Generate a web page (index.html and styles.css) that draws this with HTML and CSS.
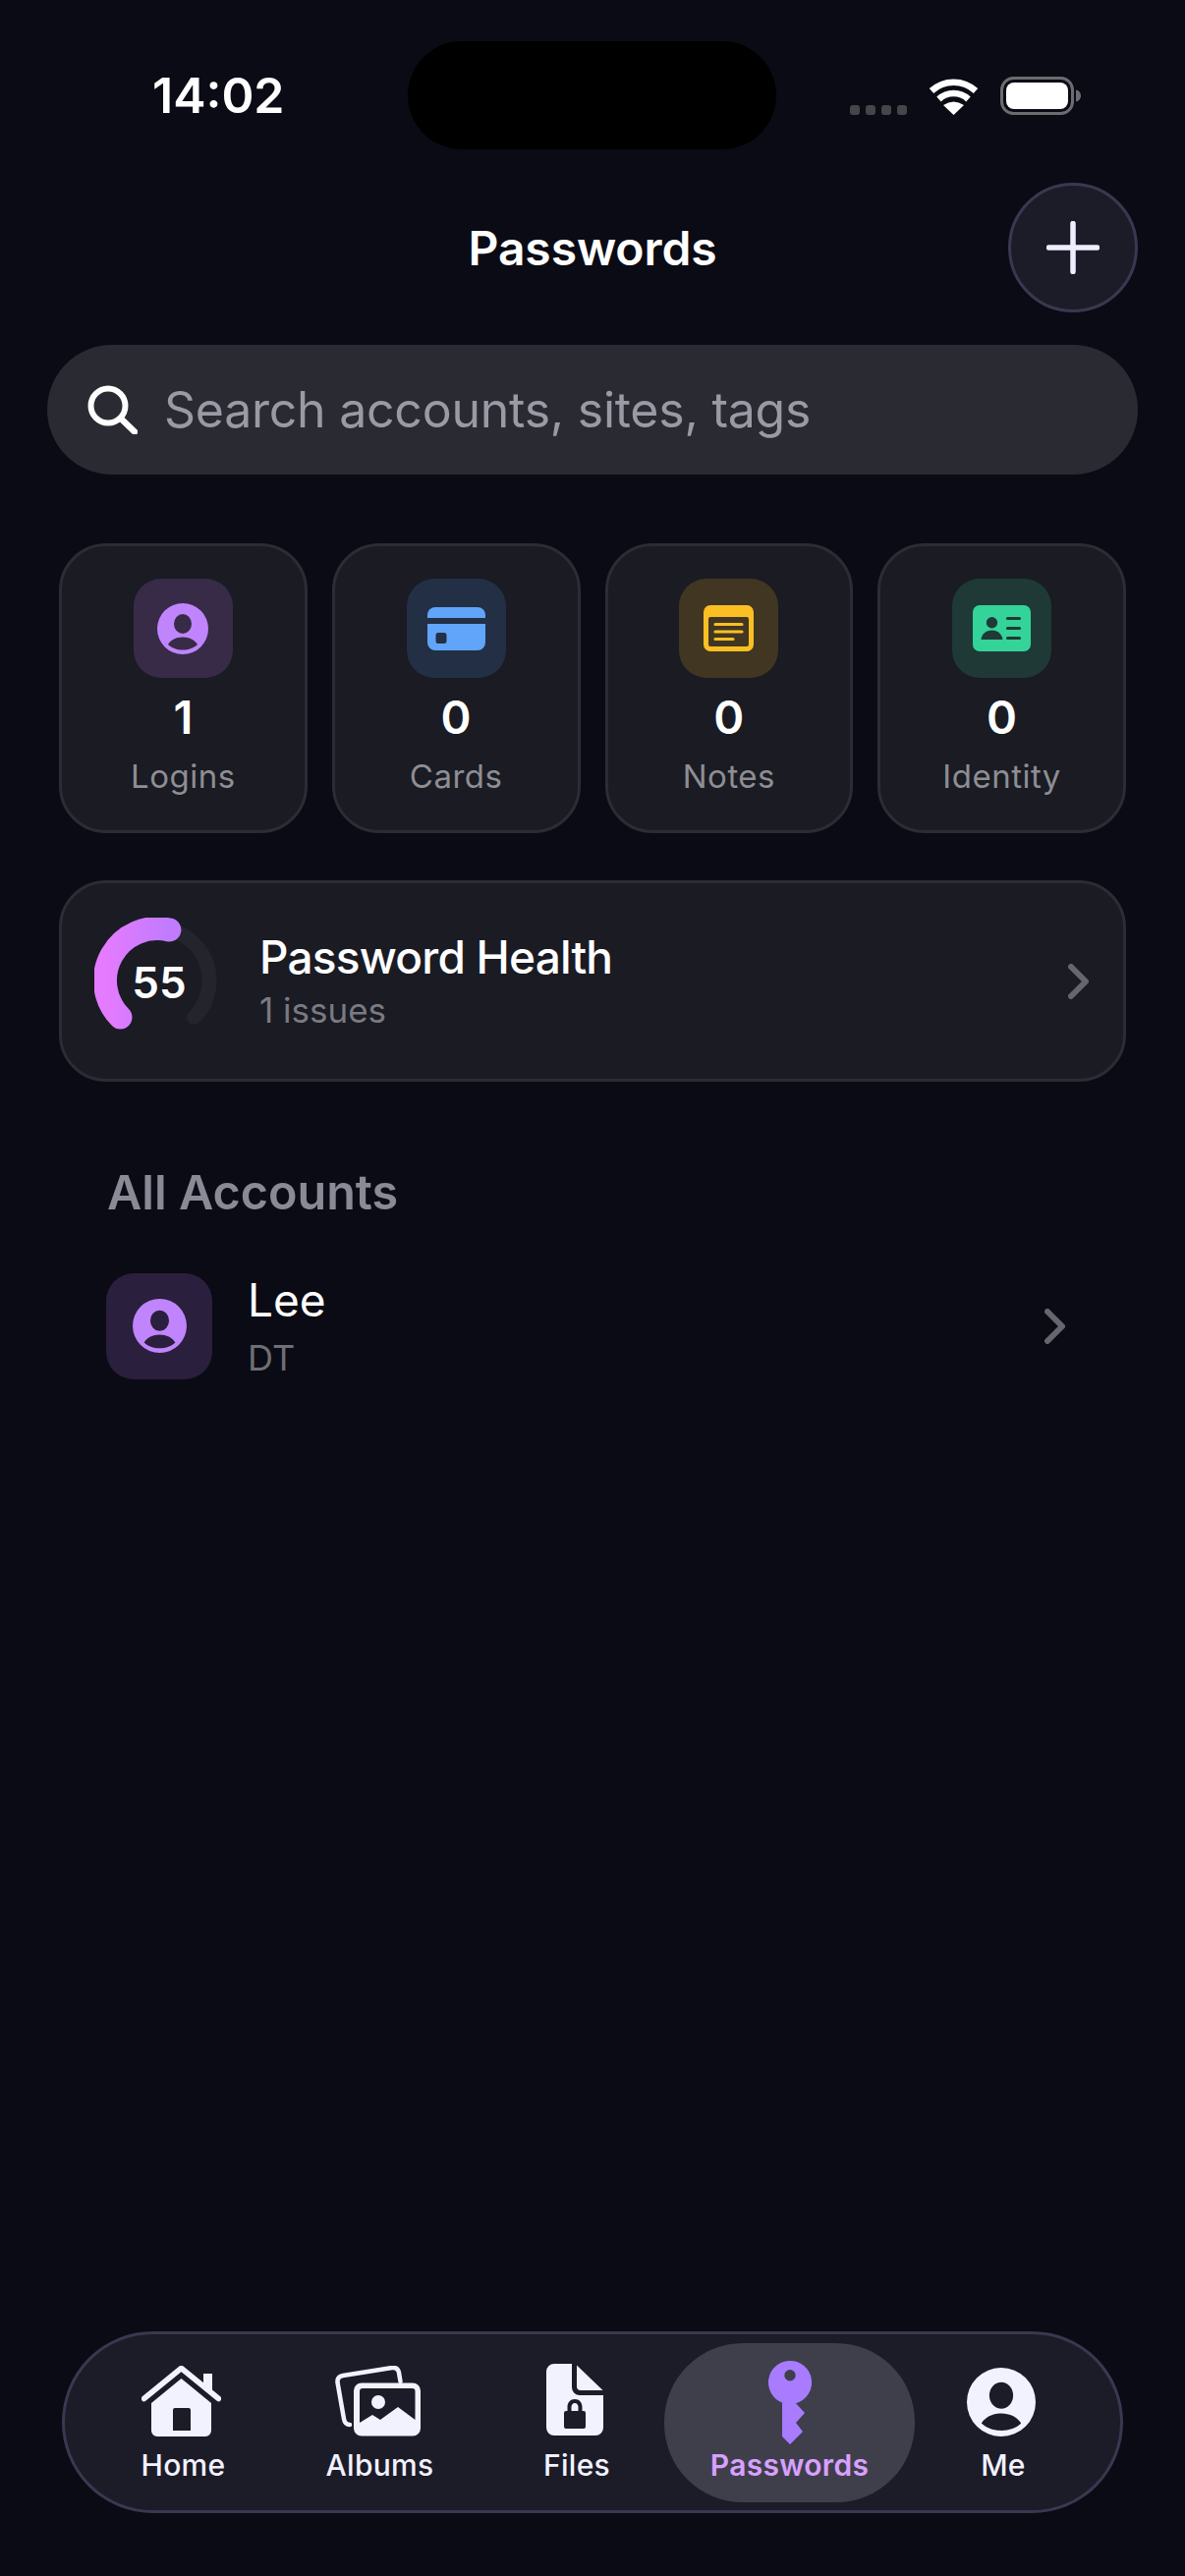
FILE: index.html
```html
<!DOCTYPE html>
<html lang="en">
<head>
    <meta charset="UTF-8">
    <meta name="viewport" content="width=device-width, initial-scale=1.0">
    <title>Passwords</title>
    <link rel="stylesheet" href="styles.css">
</head>
<body>

<svg class="defs" width="0" height="0">
    <defs>
        <path id="person" fill-rule="evenodd" d="M26 0a26 26 0 1 0 0 52a26 26 0 1 0 0-52zM26 11a9 10 0 1 1 0 20a9 10 0 1 1 0-20zM26 34.500c6.500 0 12 2.700 15 7.500c-3.500 3.500-9 5.500-15 5.500s-11.500-2-15-5.500c3-4.800 8.500-7.500 15-7.500z"/>
        <path id="chevron" d="M3 3l15 15l-15 15" fill="none" stroke="currentColor" stroke-width="6" stroke-linecap="round" stroke-linejoin="round"/>
    </defs>
</svg>

<div class="page">
    <div class="status">
        <span class="time">14:02</span>
        <div class="island"></div>
        <div class="status-icons">
            <div class="signal"><span></span><span></span><span></span><span></span></div>
            <svg class="wifi" width="51" height="37" viewBox="0 0 51 37">
                <path d="M3 12.500A33 33 0 0 1 48 12.500" fill="none" stroke="#fff" stroke-width="6.500"/>
                <path d="M10.500 21A22 22 0 0 1 40.500 21" fill="none" stroke="#fff" stroke-width="6.500"/>
                <path d="M25.500 37L15 27Q25.500 20 36 27Z" fill="#fff"/>
            </svg>
            <svg class="battery" width="82" height="39" viewBox="0 0 82 39">
                <rect x="1.500" y="1.500" width="72" height="36" rx="12" fill="none" stroke="#6c6c70" stroke-width="3"/>
                <rect x="6" y="6" width="63" height="27" rx="8" fill="#fff"/>
                <path d="M77 13.500c3 .5 5 3 5 6s-2 5.500-5 6z" fill="#6c6c70"/>
            </svg>
        </div>
    </div>

    <div class="header">
        <h1 class="title">Passwords</h1>
        <button class="add-btn">
            <svg width="54" height="54" viewBox="0 0 54 54">
                <path d="M27 2.500v49M2.500 27h49" stroke="#eeeeff" stroke-width="5.500" stroke-linecap="round"/>
            </svg>
        </button>
    </div>

    <div class="search">
        <svg width="51" height="50" viewBox="0 0 51 50">
            <circle cx="21" cy="21" r="17.500" fill="none" stroke="#fff" stroke-width="6"/>
            <path d="M34 34l14 13.500" stroke="#fff" stroke-width="6.500" stroke-linecap="round"/>
        </svg>
        <span class="search-text">Search accounts, sites, tags</span>
    </div>

    <div class="cards">
        <div class="card">
            <div class="card-icon icon-logins">
                <svg width="52" height="52" viewBox="0 0 52 52"><use href="#person"/></svg>
            </div>
            <div class="card-count">1</div>
            <div class="card-label">Logins</div>
        </div>
        <div class="card">
            <div class="card-icon icon-cards">
                <svg width="59" height="44" viewBox="0 0 59 44">
                    <path d="M0 11V8a8 8 0 0 1 8-8h43a8 8 0 0 1 8 8v3z"/>
                    <path fill-rule="evenodd" d="M0 17h59v19a8 8 0 0 1-8 8H8a8 8 0 0 1-8-8zM11 26a2.500 2.500 0 0 0-2.500 2.500v6a2.500 2.500 0 0 0 2.500 2.500h6a2.500 2.500 0 0 0 2.500-2.500v-6a2.500 2.500 0 0 0-2.500-2.500z"/>
                </svg>
            </div>
            <div class="card-count">0</div>
            <div class="card-label">Cards</div>
        </div>
        <div class="card">
            <div class="card-icon icon-notes">
                <svg width="51" height="47" viewBox="0 0 51 47">
                    <path fill-rule="evenodd" d="M7 0h37a7 7 0 0 1 7 7v33a7 7 0 0 1-7 7H7a7 7 0 0 1-7-7V7a7 7 0 0 1 7-7zM7 12a2 2 0 0 0-2 2v26a2 2 0 0 0 2 2h37a2 2 0 0 0 2-2V14a2 2 0 0 0-2-2z"/>
                    <path d="M12 19.500h27M12 27h27M12 34.500h18" stroke="currentColor" stroke-width="3.200" stroke-linecap="round"/>
                </svg>
            </div>
            <div class="card-count">0</div>
            <div class="card-label">Notes</div>
        </div>
        <div class="card">
            <div class="card-icon icon-identity">
                <svg width="59" height="47" viewBox="0 0 59 47">
                    <path fill-rule="evenodd" d="M7 0h45a7 7 0 0 1 7 7v33a7 7 0 0 1-7 7H7a7 7 0 0 1-7-7V7a7 7 0 0 1 7-7zM19.500 12a5.700 5.700 0 1 0 0 11.400a5.700 5.700 0 1 0 0-11.400zM19.500 25.500c-6 0-10.500 4-11 9.500h22c-.5-5.500-5-9.500-11-9.500z"/>
                    <path d="M35.500 13.500h12M35.500 23.500h12M35.500 33.500h12" stroke="#1f3a36" stroke-width="3.200" stroke-linecap="round"/>
                </svg>
            </div>
            <div class="card-count">0</div>
            <div class="card-label">Identity</div>
        </div>
    </div>

    <div class="health">
        <div class="gauge">
            <svg width="128" height="128" viewBox="0 0 128 128">
                <defs>
                    <linearGradient id="gaugeFill" x1="0" y1="0" x2="1" y2="0">
                        <stop offset="0" stop-color="#e57bff"/>
                        <stop offset="1" stop-color="#c07bff"/>
                    </linearGradient>
                </defs>
                <path d="M101.500 101.500A53 53 0 1 0 26.500 101.500" fill="none" stroke="#24242c" stroke-width="15" stroke-linecap="round"/>
                <path d="M26.500 101.500A53 53 0 0 1 76.400 12.500" fill="none" stroke="url(#gaugeFill)" stroke-width="24" stroke-linecap="round"/>
            </svg>
            <span class="gauge-value">55</span>
        </div>
        <div class="health-text">
            <div class="health-title">Password Health</div>
            <div class="health-sub">1 issues</div>
        </div>
        <svg class="chevron" width="21" height="36" viewBox="0 0 21 36"><use href="#chevron"/></svg>
    </div>

    <h2 class="section-title">All Accounts</h2>

    <div class="account">
        <div class="account-icon">
            <svg width="55" height="55" viewBox="0 0 52 52"><use href="#person"/></svg>
        </div>
        <div class="account-text">
            <div class="account-name">Lee</div>
            <div class="account-sub">DT</div>
        </div>
        <svg class="chevron" width="21" height="36" viewBox="0 0 21 36"><use href="#chevron"/></svg>
    </div>

    <nav class="tabbar">
        <div class="tab">
            <svg width="81" height="72" viewBox="0 0 81 72">
                <path d="M63 8h9v22l-9-8z"/>
                <path d="M2.500 33.500L40.500 2.500L78.500 33.500" fill="none" stroke="#f2f2ff" stroke-width="5.500" stroke-linecap="round" stroke-linejoin="round"/>
                <path fill-rule="evenodd" d="M40.500 13L71 38v28a6 6 0 0 1-6 6H16a6 6 0 0 1-6-6V38zM34 43a2 2 0 0 0-2 2v21h18V45a2 2 0 0 0-2-2z"/>
            </svg>
            <span class="tab-label">Home</span>
        </div>
        <div class="tab">
            <svg width="88" height="72" viewBox="0 0 88 72">
                <path d="M15 60Q10 60 9 54L2.500 17Q2 11 8 10L58 2Q64 1.500 65 7L66.500 16" fill="none" stroke="#f2f2ff" stroke-width="4.500" stroke-linecap="round"/>
                <path fill-rule="evenodd" d="M27 17.500h52a8 8 0 0 1 8 8v38a8 8 0 0 1-8 8H27a8 8 0 0 1-8-8v-38a8 8 0 0 1 8-8zM28 23a3 3 0 0 0-3 3v32l13-8l8 5l18-13l17.500 13V26a3 3 0 0 0-3-3zM44 30a7 7 0 1 1 0 14a7 7 0 1 1 0-14z"/>
            </svg>
            <span class="tab-label">Albums</span>
        </div>
        <div class="tab">
            <svg width="58" height="74" viewBox="0 0 58 74">
                <path d="M31 1.500L57.500 27H35a4 4 0 0 1-4-4z"/>
                <path fill-rule="evenodd" d="M8 0H26V24a8 8 0 0 0 8 8H58V65a8 8 0 0 1-8 8H8a8 8 0 0 1-8-8V8a8 8 0 0 1 8-8zM29 36c-4.500 0-7.500 3.500-7.500 8v4H20a2 2 0 0 0-2 2v14a2 2 0 0 0 2 2h18a2 2 0 0 0 2-2V50a2 2 0 0 0-2-2h-1.500v-4c0-4.500-3-8-7.500-8zM29 40c2.200 0 3.500 1.800 3.500 4v4h-7v-4c0-2.200 1.300-4 3.500-4z"/>
            </svg>
            <span class="tab-label">Files</span>
        </div>
        <div class="tab tab-active">
            <svg width="44" height="85" viewBox="0 0 44 85">
                <path fill-rule="evenodd" d="M22 0a22 22 0 0 1 6 43.200L37 53L28 63L35 72L22 85L14 77V42.500A22 22 0 0 1 22 0zM22 9a5.700 5.700 0 1 0 0 11.400a5.700 5.700 0 1 0 0-11.400z"/>
            </svg>
            <span class="tab-label">Passwords</span>
        </div>
        <div class="tab">
            <svg width="70" height="70" viewBox="0 0 52 52"><use href="#person"/></svg>
            <span class="tab-label">Me</span>
        </div>
    </nav>
</div>

</body>
</html>
```
FILE: styles.css
```css
* {
    box-sizing: border-box;
}
body {
    margin: 0;
    background-color: #0a0b14;
    font-family: Inter, "Noto Sans", sans-serif;
    color: #fff;
}
.defs {
    display: block;
    height: 0;
}
.page {
    width: 1206px;
    height: 2622px;
    display: flex;
    flex-direction: column;
}

/* status bar */
.status {
    display: grid;
    grid-template-columns: 415px 375px 1fr;
    align-items: center;
    height: 110px;
    margin-top: 42px;
}
.time {
    padding-left: 155px;
    font-size: 50px;
    font-weight: 600;
}
.island {
    height: 110px;
    background: #000;
    border-radius: 55px;
}
.status-icons {
    display: flex;
    align-items: flex-end;
    gap: 22px;
    padding-left: 75px;
}
.signal {
    display: flex;
    gap: 6px;
}
.signal span {
    width: 10px;
    height: 10px;
    border-radius: 3px;
    background: #45454a;
}

/* header */
.header {
    display: grid;
    grid-template-columns: 132px 1fr 132px;
    align-items: center;
    margin-top: 34px;
    padding: 0 48px;
}
.title {
    grid-column: 2;
    margin: 0;
    text-align: center;
    font-size: 48px;
    font-weight: 600;
    letter-spacing: -0.1px;
}
.add-btn {
    grid-column: 3;
    width: 132px;
    height: 132px;
    display: flex;
    align-items: center;
    justify-content: center;
    padding: 0;
    background: #1c1c28;
    border: 3px solid #3a3850;
    border-radius: 50%;
}

/* search */
.search {
    display: flex;
    align-items: center;
    gap: 27px;
    height: 132px;
    margin: 33px 48px 0;
    padding-left: 41px;
    background: #2a2a33;
    border-radius: 66px;
}
.search-text {
    font-size: 50px;
    letter-spacing: -0.25px;
    color: #9a9aa5;
}

/* stat cards */
.cards {
    display: grid;
    grid-template-columns: repeat(4, 1fr);
    gap: 25px;
    margin-top: 70px;
    padding: 0 60px;
}
.card {
    height: 295px;
    padding-top: 33px;
    display: flex;
    flex-direction: column;
    align-items: center;
    background: #1a1b23;
    border: 3px solid #2c2d34;
    border-radius: 48px;
}
.card-icon {
    width: 101px;
    height: 101px;
    display: flex;
    align-items: center;
    justify-content: center;
    border-radius: 28px;
}
.card-icon svg {
    fill: currentColor;
}
.icon-logins { background: #372b47; color: #c084fc; }
.icon-cards { background: #232f44; color: #60a5fa; }
.icon-notes { background: #403622; color: #fbbf24; }
.icon-identity { background: #1f3a36; color: #34d399; }
.card-count {
    margin-top: 11px;
    font-size: 47px;
    font-weight: 600;
    line-height: 57px;
}
.card-label {
    margin-top: 11px;
    font-size: 33px;
    line-height: 42px;
    letter-spacing: 0.5px;
    color: #8e8e93;
}

/* password health */
.health {
    display: flex;
    align-items: center;
    height: 205px;
    margin: 48px 60px 0;
    padding: 0 35px 0 33px;
    background: #1a1b23;
    border: 3px solid #2c2d34;
    border-radius: 48px;
}
.gauge {
    position: relative;
    width: 128px;
    height: 128px;
    flex: none;
    margin-top: -2px;
}
.gauge svg {
    display: block;
}
.gauge-value {
    position: absolute;
    top: 38px;
    left: 2px;
    width: 128px;
    text-align: center;
    font-size: 44px;
    font-weight: 600;
    line-height: 56px;
}
.health-text {
    flex: 1;
    margin-left: 40px;
}
.health-title {
    margin-top: -2px;
    font-size: 46px;
    font-weight: 500;
    line-height: 56px;
    letter-spacing: -0.8px;
}
.health-sub {
    margin-top: 4px;
    font-size: 35px;
    line-height: 44px;
    color: #7a7a80;
}
.chevron {
    flex: none;
    color: #66666c;
}

/* accounts */
.section-title {
    margin: 84px 0 0 109px;
    font-size: 48.500px;
    font-weight: 600;
    line-height: 58px;
    color: #8a8a96;
}
.account {
    display: flex;
    align-items: center;
    margin-top: 52px;
    padding: 0 122px 0 108px;
}
.account-icon {
    width: 108px;
    height: 108px;
    display: flex;
    align-items: center;
    justify-content: center;
    background: #2a1f3d;
    border-radius: 28px;
    color: #c084fc;
    fill: currentColor;
}
.account-text {
    flex: 1;
    margin-left: 36px;
}
.account-name {
    font-size: 46px;
    line-height: 56px;
}
.account-sub {
    margin-top: 9px;
    font-size: 36px;
    line-height: 44px;
    color: #6f6f75;
}

/* tab bar */
.tabbar {
    display: grid;
    grid-template-columns: 177px 223px 178px 255px 180px;
    align-items: center;
    height: 185px;
    margin: auto 63px 64px;
    padding-left: 32px;
    background: #1c1c28;
    border: 3px solid #3a3850;
    border-radius: 93px;
}
.tab {
    display: flex;
    flex-direction: column;
    align-items: center;
    justify-content: flex-end;
    height: 162px;
    padding-bottom: 20px;
    fill: #f2f2ff;
    color: #f2f2ff;
}
.tab svg {
    margin-right: 4px;
}
.tab-active {
    background: #3f3f4b;
    border-radius: 80px;
    fill: #a87bff;
    color: #d8a0ff;
}
.tab-active svg {
    margin-right: 0;
    margin-bottom: -8px;
}
.tab-active .tab-label {
    font-weight: 600;
}
.tab-label {
    margin-top: 11px;
    font-size: 30px;
    font-weight: 500;
    line-height: 36px;
    letter-spacing: 0.3px;
}
```
